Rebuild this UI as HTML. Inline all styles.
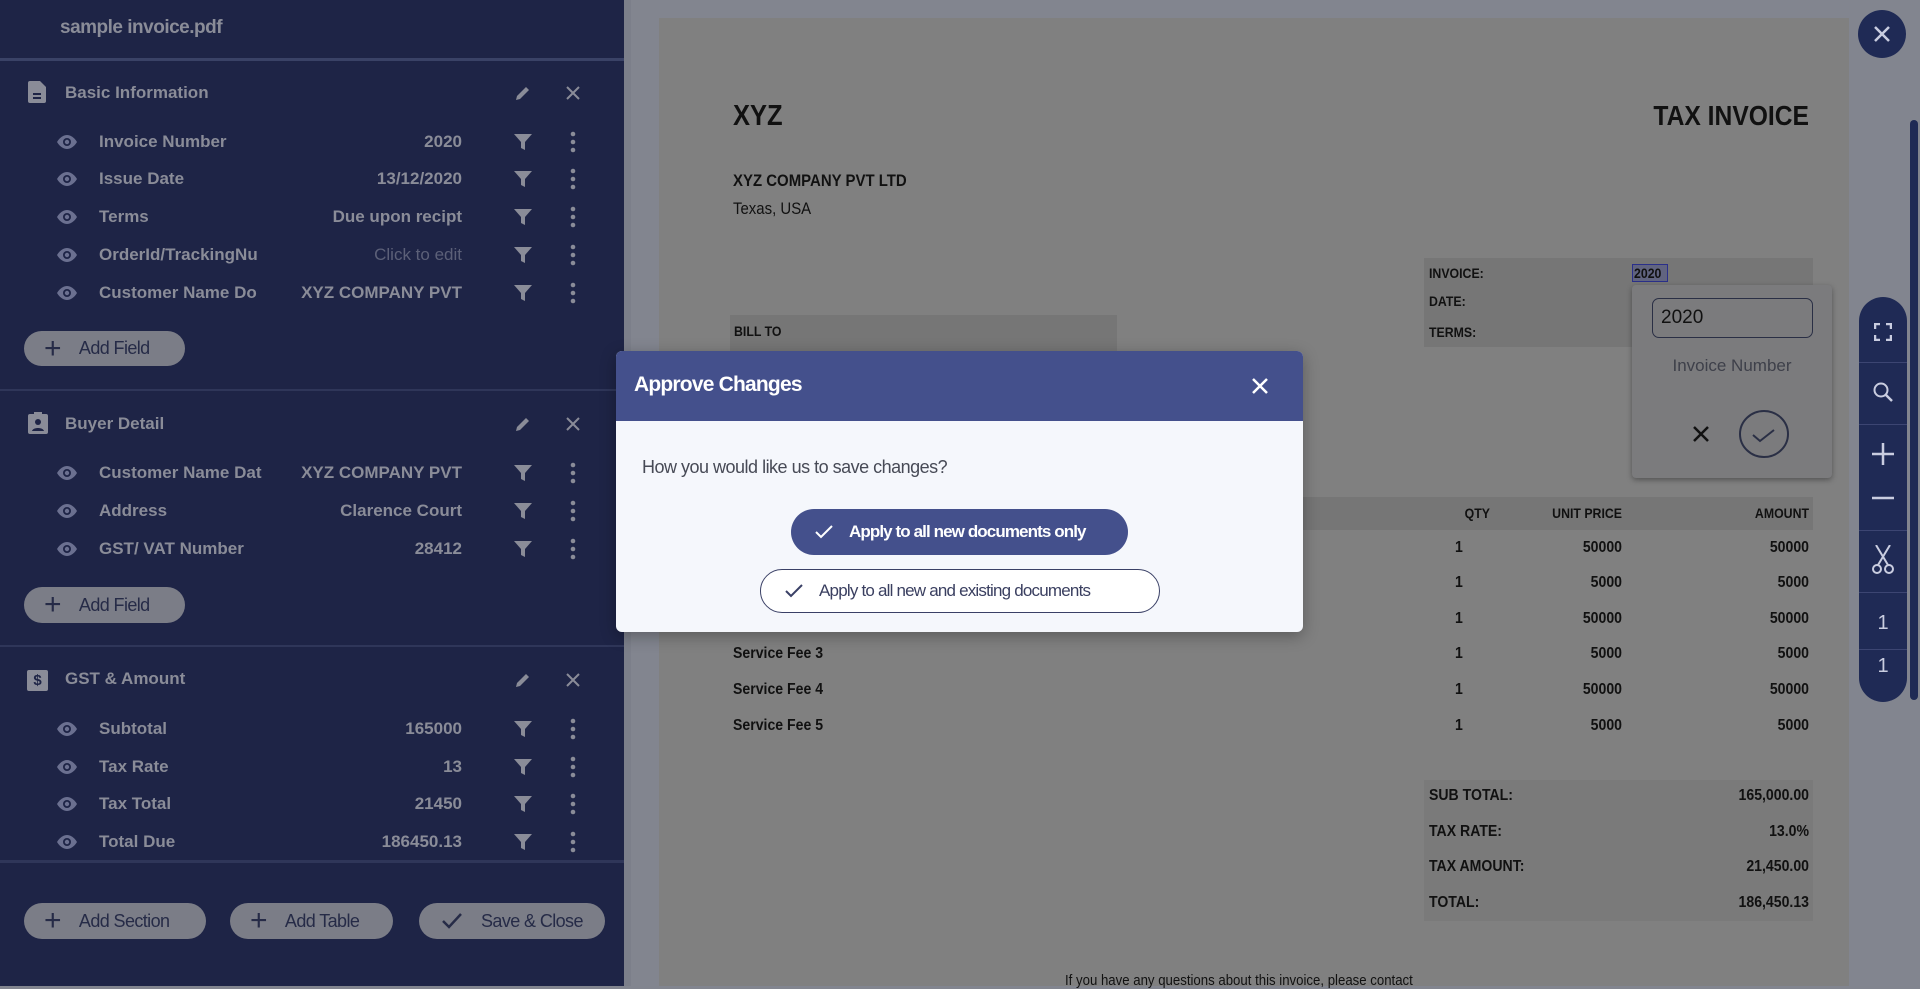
<!DOCTYPE html>
<html><head><meta charset="utf-8">
<style>
*{margin:0;padding:0;box-sizing:border-box}
body{width:1920px;height:986px;overflow:hidden;position:relative;background:#82858f;font-family:"Liberation Sans",sans-serif}
.abs{position:absolute}
#side{left:0;top:0;width:631px;height:986px;background:#1e2446}
.sep{position:absolute;left:0;width:625px;height:2px;background:#2f3659}
.t{position:absolute;color:#8a8c98;font-weight:bold;font-size:17px;white-space:nowrap}
.lab{left:99px}
.val{right:169px;text-align:right}
.eye{position:absolute;left:56px;width:22px;height:14px}
.fil{position:absolute;left:514px;width:18px;height:16px}
.dots{position:absolute;left:570px;width:6px;height:22px}
.btn{position:absolute;background:#7b7d87;border-radius:20px;color:#262b47;font-size:18px;letter-spacing:-0.6px;white-space:nowrap;display:flex;align-items:center}
.btn .pl{font-size:30px;font-weight:300;margin:0 18px 0 20px;line-height:1}
.dt{position:absolute;color:#111;font-weight:bold;font-size:16px;white-space:nowrap;transform:scaleX(.88)}
.dl{transform-origin:left center}
.dr{transform-origin:right center;text-align:right}
.tb{position:absolute;left:1859px;width:48px;height:1px;background:#3c4572}
.ti{position:absolute;color:#c9cde0;font-size:20px;width:48px;text-align:center;left:1859px}
</style></head><body>
<div id="side" class="abs">
 <div class="t" style="left:60px;top:17px;font-size:19px;letter-spacing:-0.5px">sample invoice.pdf</div>
 <div class="sep" style="top:58px;background:#3a4266;height:3px"></div>

 <svg class="abs" style="left:28px;top:81px" width="18" height="22" viewBox="0 0 18 22"><path d="M2 0h10l6 6v14a2 2 0 0 1-2 2H2a2 2 0 0 1-2-2V2a2 2 0 0 1 2-2z" fill="#8a8c98"/><rect x="5" y="12" width="8" height="2" fill="#1e2446"/><rect x="5" y="16" width="8" height="2" fill="#1e2446"/></svg>
 <div class="t" style="left:65px;top:83px">Basic Information</div>
 <svg class="abs" style="left:514px;top:84px" width="18" height="18" viewBox="0 0 18 18"><path d="M2 16l1-4 9-9 3 3-9 9z" fill="#8a8c98"/></svg>
 <svg class="abs" style="left:565px;top:85px" width="16" height="16" viewBox="0 0 16 16"><path d="M2 2l12 12M14 2L2 14" stroke="#8a8c98" stroke-width="2"/></svg>

 <div id="rows"></div>

 <div class="btn" style="left:24px;top:331px;width:161px;height:35px"><span class="pl">+</span>Add Field</div>
 <div class="sep" style="top:389px"></div>

 <svg class="abs" style="left:28px;top:412px" width="20" height="22" viewBox="0 0 20 22"><rect x="0" y="2" width="20" height="20" rx="2" fill="#8a8c98"/><rect x="6" y="0" width="8" height="4" fill="#8a8c98"/><circle cx="10" cy="10" r="3" fill="#1e2446"/><path d="M4 19c1-4 11-4 12 0z" fill="#1e2446"/></svg>
 <div class="t" style="left:65px;top:414px">Buyer Detail</div>
 <svg class="abs" style="left:514px;top:415px" width="18" height="18" viewBox="0 0 18 18"><path d="M2 16l1-4 9-9 3 3-9 9z" fill="#8a8c98"/></svg>
 <svg class="abs" style="left:565px;top:416px" width="16" height="16" viewBox="0 0 16 16"><path d="M2 2l12 12M14 2L2 14" stroke="#8a8c98" stroke-width="2"/></svg>

 <div class="btn" style="left:24px;top:587px;width:161px;height:36px"><span class="pl">+</span>Add Field</div>
 <div class="sep" style="top:645px"></div>

 <div class="abs" style="left:27px;top:670px;width:21px;height:21px;background:#8a8c98;border-radius:2px;color:#1e2446;font-weight:bold;font-size:15px;text-align:center;line-height:21px">$</div>
 <div class="t" style="left:65px;top:669px">GST &amp; Amount</div>
 <svg class="abs" style="left:514px;top:671px" width="18" height="18" viewBox="0 0 18 18"><path d="M2 16l1-4 9-9 3 3-9 9z" fill="#8a8c98"/></svg>
 <svg class="abs" style="left:565px;top:672px" width="16" height="16" viewBox="0 0 16 16"><path d="M2 2l12 12M14 2L2 14" stroke="#8a8c98" stroke-width="2"/></svg>

 <div class="sep" style="top:860px;height:3px;background:#2f3659"></div>

 <div class="btn" style="left:24px;top:903px;width:182px;height:36px"><span class="pl">+</span>Add Section</div>
 <div class="btn" style="left:230px;top:903px;width:163px;height:36px"><span class="pl">+</span>Add Table</div>
 <div class="btn" style="left:419px;top:903px;width:186px;height:36px"><svg style="margin:0 18px 0 22px" width="22" height="18" viewBox="0 0 22 18"><path d="M2 9l6 6L20 2" stroke="#262b47" stroke-width="2.5" fill="none"/></svg>Save &amp; Close</div>
 <div class="abs" style="left:624px;top:0;width:7px;height:986px;background:#7c7f8a"></div>
</div>

<div class="abs" style="left:631px;top:0;width:1289px;height:986px;background:#82858f"></div>
<div class="abs" style="left:659px;top:18px;width:1190px;height:968px;background:#808080"></div>
<div class="abs" style="left:1910px;top:120px;width:8px;height:580px;background:#1f2a55;border-radius:4px"></div>

<div class="dt dl" style="left:733px;top:100px;font-size:29px">XYZ</div>
<div class="dt dr" style="left:1540px;top:100px;width:269px;font-size:28px">TAX INVOICE</div>
<div class="dt dl" style="left:733px;top:171px;font-size:17px">XYZ COMPANY PVT LTD</div>
<div class="dt dl" style="left:733px;top:199px;font-size:17px;font-weight:normal">Texas, USA</div>

<div class="abs" style="left:1424px;top:258px;width:389px;height:89px;background:#767676"></div>
<div class="dt dl" style="left:1429px;top:265px;font-size:14px">INVOICE:</div>
<div class="dt dl" style="left:1429px;top:293px;font-size:14px">DATE:</div>
<div class="dt dl" style="left:1429px;top:324px;font-size:14px">TERMS:</div>
<div class="abs" style="left:1632px;top:264px;width:36px;height:18px;border:1px solid #2a2f8a;background:rgba(60,70,150,.35)"></div>
<div class="dt dl" style="left:1634px;top:265px;font-size:14px">2020</div>

<div class="abs" style="left:730px;top:315px;width:387px;height:40px;background:#767676"></div>
<div class="dt dl" style="left:734px;top:323px;font-size:14px">BILL TO</div>

<div class="abs" style="left:730px;top:497px;width:1083px;height:33px;background:#767676"></div>
<div class="dt dr" style="left:1440px;top:505px;width:50px;font-size:14px">QTY</div>
<div class="dt dr" style="left:1500px;top:505px;width:122px;font-size:14px">UNIT PRICE</div>
<div class="dt dr" style="left:1700px;top:505px;width:109px;font-size:14px">AMOUNT</div>

<div id="trows"></div>

<div class="abs" style="left:1424px;top:780px;width:389px;height:141px;background:#7a7a7a"></div>
<div class="dt dl" style="left:1429px;top:787px">SUB TOTAL:</div><div class="dt dr" style="left:1600px;top:787px;width:209px">165,000.00</div>
<div class="dt dl" style="left:1429px;top:823px">TAX RATE:</div><div class="dt dr" style="left:1600px;top:823px;width:209px">13.0%</div>
<div class="dt dl" style="left:1429px;top:858px">TAX AMOUNT:</div><div class="dt dr" style="left:1600px;top:858px;width:209px">21,450.00</div>
<div class="dt dl" style="left:1429px;top:894px">TOTAL:</div><div class="dt dr" style="left:1600px;top:894px;width:209px">186,450.13</div>
<div class="dt dl" style="left:1065px;top:972px;font-size:15px;font-weight:normal">If you have any questions about this invoice, please contact</div>

<div class="abs" style="left:1632px;top:285px;width:200px;height:193px;background:#7b7b7d;border-radius:4px;box-shadow:0 2px 6px rgba(0,0,0,.35)"></div>
<div class="abs" style="left:1652px;top:298px;width:161px;height:40px;border:1px solid #2a2f45;border-radius:7px;font-size:19px;color:#111;padding:8px 8px">2020</div>
<div class="abs" style="left:1632px;top:356px;width:200px;text-align:center;font-size:17px;color:#3e404a">Invoice Number</div>
<svg class="abs" style="left:1691px;top:424px" width="20" height="20" viewBox="0 0 20 20"><path d="M3 3l14 14M17 3L3 17" stroke="#111" stroke-width="2.5"/></svg>
<svg class="abs" style="left:1738px;top:409px" width="52" height="50" viewBox="0 0 52 50"><ellipse cx="26" cy="25" rx="24" ry="23" fill="none" stroke="#2a2f45" stroke-width="2"/><path d="M15 26l7 6 14-11" stroke="#2a2f45" stroke-width="2" fill="none"/></svg>

<div class="abs" style="left:1858px;top:10px;width:48px;height:48px;border-radius:50%;background:#1f2a55"></div>
<svg class="abs" style="left:1872px;top:24px" width="20" height="20" viewBox="0 0 20 20"><path d="M3 3l14 14M17 3L3 17" stroke="#c9cde0" stroke-width="2.5"/></svg>

<div class="abs" style="left:1859px;top:297px;width:48px;height:405px;border-radius:24px;background:#1f2a55"></div>
<svg class="abs" style="left:1874px;top:323px" width="18" height="18" viewBox="0 0 18 18"><path d="M1 6V1h5M12 1h5v5M17 12v5h-5M6 17H1v-5" stroke="#c9cde0" stroke-width="2.5" fill="none"/></svg>
<div class="tb" style="top:362px"></div>
<svg class="abs" style="left:1872px;top:381px" width="22" height="22" viewBox="0 0 22 22"><circle cx="9" cy="9" r="6.5" stroke="#c9cde0" stroke-width="2" fill="none"/><path d="M14 14l6 6" stroke="#c9cde0" stroke-width="2.5"/></svg>
<div class="tb" style="top:424px"></div>
<svg class="abs" style="left:1872px;top:443px" width="22" height="22" viewBox="0 0 22 22"><path d="M11 0v22M0 11h22" stroke="#c9cde0" stroke-width="2.5"/></svg>
<svg class="abs" style="left:1872px;top:496px" width="22" height="4" viewBox="0 0 22 4"><path d="M0 2h22" stroke="#c9cde0" stroke-width="2.5"/></svg>
<div class="tb" style="top:530px"></div>
<svg class="abs" style="left:1872px;top:545px" width="22" height="30" viewBox="0 0 22 30"><path d="M4 0l12 20M18 0L6 20" stroke="#c9cde0" stroke-width="2"/><circle cx="5" cy="24" r="4" stroke="#c9cde0" stroke-width="2" fill="none"/><circle cx="17" cy="24" r="4" stroke="#c9cde0" stroke-width="2" fill="none"/></svg>
<div class="tb" style="top:592px"></div>
<div class="ti" style="top:612px">1</div>
<div class="tb" style="top:649px"></div>
<div class="ti" style="top:655px">1</div>

<div class="abs" style="left:616px;top:351px;width:687px;height:281px;background:#f5f7fc;border-radius:6px;overflow:hidden;box-shadow:0 4px 16px rgba(0,0,0,.3)">
 <div style="height:70px;background:#44508c;position:relative">
  <div style="position:absolute;left:18px;top:22px;color:#fff;font-weight:bold;font-size:21px;letter-spacing:-0.8px">Approve Changes</div>
  <svg style="position:absolute;left:635px;top:26px" width="18" height="18" viewBox="0 0 18 18"><path d="M2 2l14 14M16 2L2 16" stroke="#fff" stroke-width="2.5"/></svg>
 </div>
 <div style="position:absolute;left:26px;top:106px;font-size:18px;color:#474a56;letter-spacing:-0.5px;white-space:nowrap">How you would like us to save changes?</div>
 <div style="position:absolute;left:175px;top:158px;width:337px;height:46px;border-radius:23px;background:#44508c;color:#fff;font-weight:bold;font-size:17px;letter-spacing:-0.9px;white-space:nowrap;display:flex;align-items:center">
  <svg style="margin:0 16px 0 24px;flex:none" width="18" height="14" viewBox="0 0 18 14"><path d="M1 7l5 5L17 1" stroke="#fff" stroke-width="2" fill="none"/></svg>Apply to all new documents only</div>
 <div style="position:absolute;left:144px;top:218px;width:400px;height:44px;border-radius:22px;background:#fff;border:1.5px solid #3a4066;color:#3a3f60;font-size:17px;letter-spacing:-0.8px;white-space:nowrap;display:flex;align-items:center">
  <svg style="margin:0 16px 0 24px;flex:none" width="18" height="14" viewBox="0 0 18 14"><path d="M1 7l5 5L17 1" stroke="#3a4066" stroke-width="2" fill="none"/></svg>Apply to all new and existing documents</div>
</div>

<script>
(function(){
var rows=[
[142,'Invoice Number','2020'],[179,'Issue Date','13/12/2020'],[217,'Terms','Due upon recipt'],[255,'OrderId/TrackingNu','Click to edit'],[293,'Customer Name Do','XYZ COMPANY PVT'],
[473,'Customer Name Dat','XYZ COMPANY PVT'],[511,'Address','Clarence Court'],[549,'GST/ VAT Number','28412'],
[729,'Subtotal','165000'],[767,'Tax Rate','13'],[804,'Tax Total','21450'],[842,'Total Due','186450.13']];
var h='';
rows.forEach(function(r){
 var y=r[0];
 h+='<svg class="eye" style="top:'+(y-7)+'px" viewBox="0 0 22 14"><path d="M1 7C4 2 8 0 11 0s7 2 10 7c-3 5-7 7-10 7S4 12 1 7z" fill="#6b7090"/><circle cx="11" cy="7" r="4" fill="#1e2446"/><circle cx="11" cy="7" r="2.2" fill="#6b7090"/></svg>';
 h+='<div class="t lab" style="top:'+(y-10)+'px;max-width:167px;overflow:hidden">'+r[1]+'</div>';
 var c=r[2]=='Click to edit'?'color:#5c6078;font-weight:normal;':'';
 h+='<div class="t val" style="top:'+(y-10)+'px;'+c+'">'+r[2]+'</div>';
 h+='<svg class="fil" style="top:'+(y-8)+'px" viewBox="0 0 18 16"><path d="M0 0h18l-7 8v8l-4-2V8z" fill="#8a8c98"/></svg>';
 h+='<svg class="dots" style="top:'+(y-11)+'px" viewBox="0 0 6 22"><circle cx="3" cy="3" r="2.3" fill="#8a8c98"/><circle cx="3" cy="11" r="2.3" fill="#8a8c98"/><circle cx="3" cy="19" r="2.3" fill="#8a8c98"/></svg>';
});
document.getElementById('rows').outerHTML=h;
var t=[[549,'','50000','50000'],[584,'','5000','5000'],[620,'','50000','50000'],[655,'Service Fee 3','5000','5000'],[691,'Service Fee 4','50000','50000'],[727,'Service Fee 5','5000','5000']];
var g='';
t.forEach(function(r){var y=r[0]-10;
 if(r[1])g+='<div class="dt dl" style="left:733px;top:'+y+'px">'+r[1]+'</div>';
 g+='<div class="dt dl" style="left:1455px;top:'+y+'px">1</div>';
 g+='<div class="dt dr" style="left:1500px;top:'+y+'px;width:122px">'+r[2]+'</div>';
 g+='<div class="dt dr" style="left:1700px;top:'+y+'px;width:109px">'+r[3]+'</div>';
});
document.getElementById('trows').outerHTML=g;
})();
</script>
</body></html>
